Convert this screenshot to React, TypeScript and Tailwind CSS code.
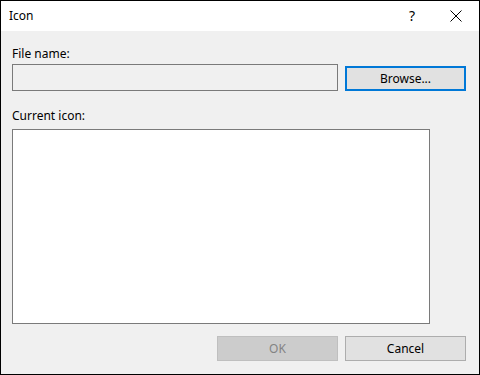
import React from "react";

export default function App() {
  return (
    <div
      className="w-[480px] h-[375px] border border-black flex flex-col text-[12px] text-black"
      style={{ fontFamily: '"Noto Sans", "Liberation Sans", sans-serif' }}
    >
      <div className="h-[30px] bg-white flex items-center shrink-0">
        <span className="pl-[8px] flex-1 leading-[16px]">Icon</span>
        <span className="w-[20px] text-center text-[14px] leading-[16px] mr-[28px]">?</span>
        <svg width="12" height="12" viewBox="0 0 12 12" className="mr-[17px]">
          <path d="M0.5 0.5 L11.5 11.5 M11.5 0.5 L0.5 11.5" stroke="#000" strokeWidth="1" fill="none" />
        </svg>
      </div>
      <div className="flex-1 bg-[#f0f0f0] pl-[11px] flex flex-col">
        <div className="mt-[15px] leading-[16px]">File name:</div>
        <div className="mt-[2px] flex items-start">
          <div className="w-[326px] h-[27px] border border-[#7a7a7a] bg-[#f0f0f0]" />
          <button className="ml-[7px] mt-[2px] w-[121px] h-[25px] border-2 border-[#0078d7] bg-[#e1e1e1] flex items-center justify-center leading-[16px]">
            Browse...
          </button>
        </div>
        <div className="mt-[17px] leading-[16px]">Current icon:</div>
        <div className="mt-[5px] w-[418px] h-[195px] border border-[#7a7a7a] bg-white" />
        <div className="mt-[12px] flex">
          <button className="ml-[205px] w-[121px] h-[25px] border border-[#bfbfbf] bg-[#cccccc] text-[#838383] flex items-center justify-center leading-[16px]">
            OK
          </button>
          <button className="ml-[7px] w-[121px] h-[25px] border border-[#adadad] bg-[#e1e1e1] flex items-center justify-center leading-[16px]">
            Cancel
          </button>
        </div>
      </div>
    </div>
  );
}
